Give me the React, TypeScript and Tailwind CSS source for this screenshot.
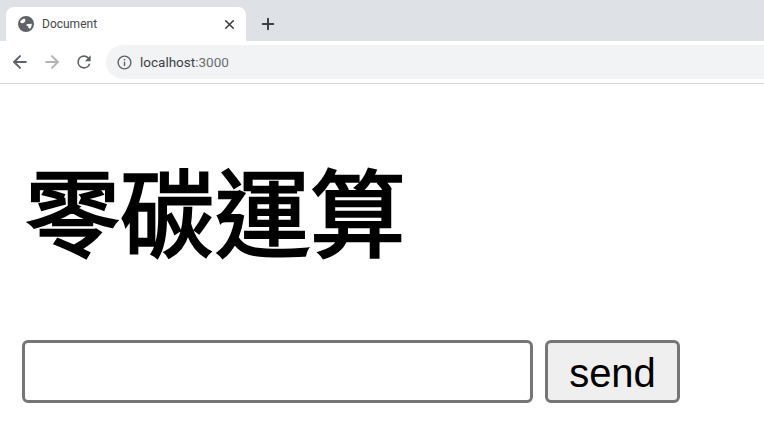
import { ArrowLeft, ArrowRight, Plus, X } from "lucide-react";

// chrome's default favicon: dark disc with the land cut out
const GlobeIcon = () => (
  <svg viewBox="0 0 16 16" className="w-4 h-4" fill="#5f6368">
    <path
      fillRule="evenodd"
      d="M8 0a8 8 0 1 0 0 16A8 8 0 0 0 8 0zM2.200 5.500C3 4 4.500 2.800 6.500 2.400L7.500 4 6.800 6 5 7.200 2.800 7zM8.500 8.200l5.200-.4c.2 1.800-.5 3.700-1.700 4.900l-1.500-.7-.4-1.800-1.600-.6z"
    />
  </svg>
);

const ReloadIcon = () => (
  <svg viewBox="0 0 24 24" className="w-[20px] h-[20px] ml-[12px]" fill="#5f6368">
    <path d="M17.650 6.350A7.960 7.960 0 0 0 12 4a8 8 0 1 0 7.730 10h-2.080A6 6 0 1 1 12 6c1.660 0 3.140.69 4.220 1.780L13 11h7V4l-2.350 2.350z" />
  </svg>
);

const InfoIcon = () => (
  <svg viewBox="0 0 24 24" className="w-[17px] h-[17px]" fill="#5f6368">
    <path d="M11 7h2v2h-2zm0 4h2v6h-2zm1-9a10 10 0 1 0 0 20 10 10 0 0 0 0-20zm0 18a8 8 0 1 1 0-16 8 8 0 0 1 0 16z" />
  </svg>
);

export default function App() {
  return (
    <div className="w-[764px] h-[435px] overflow-hidden bg-white font-['Liberation_Sans',sans-serif]">
      <div className="h-[41px] bg-[#dee1e6] flex items-end pl-[6px]">
        <div className="w-[240px] h-[34px] bg-white rounded-t-lg flex items-center pl-[12px] pr-[9px]">
          <GlobeIcon />
          <span className="ml-[8px] flex-1 text-xs text-[#45474a] font-['Roboto',sans-serif]">Document</span>
          <X className="w-[15px] h-[15px] text-[#3c4043]" strokeWidth={2.6} />
        </div>
        <div className="h-[34px] flex items-center ml-[13px]">
          <Plus className="w-[18px] h-[18px] text-[#3c4043]" strokeWidth={2.6} />
        </div>
      </div>
      <div className="h-[43px] border-b border-[#d5d7da] flex items-center pl-[10px]">
        <ArrowLeft className="w-[20px] h-[20px] text-[#5f6368]" strokeWidth={2.4} />
        <ArrowRight className="w-[20px] h-[20px] ml-[12px] text-[#b2b4b6]" strokeWidth={2.4} />
        <ReloadIcon />
        <div className="ml-[12px] flex-1 h-[34px] bg-[#f1f3f4] rounded-l-full flex items-center pl-[10px]">
          <InfoIcon />
          <span className="ml-[7px] text-[13.500px] text-[#3c3f43] font-['Roboto',sans-serif]">
            localhost<span className="text-[#6a6e73]">:3000</span>
          </span>
        </div>
      </div>
      <div className="px-[22px]">
        <h1 className="mt-[70px] pl-[3px] text-[95px] leading-[110px] font-normal text-black font-['Noto_Sans_CJK_TC',sans-serif] [-webkit-text-stroke:2.5px_black]">
          零碳運算
        </h1>
        <div className="mt-[76px] flex gap-[12px]">
          <input className="w-[511px] h-[63px] border-[3px] border-[#767676] rounded-[6px] bg-white" />
          <button className="w-[135px] h-[63px] border-[3px] border-[#767676] rounded-[6px] bg-[#efefef] text-[40px] text-black">
            send
          </button>
        </div>
      </div>
    </div>
  );
}
